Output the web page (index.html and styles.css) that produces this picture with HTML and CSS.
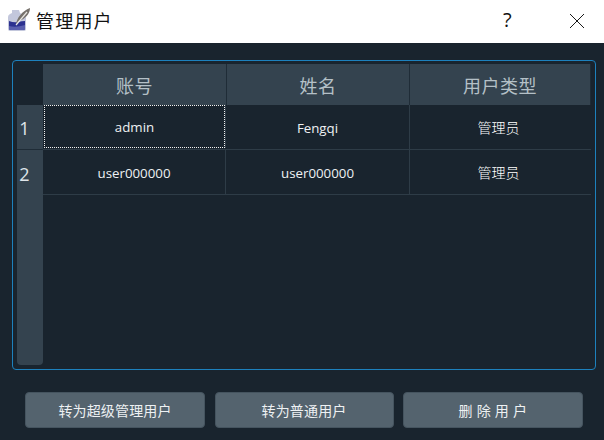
FILE: index.html
```html
<!DOCTYPE html>
<html lang="zh">
<head>
<meta charset="utf-8">
<title>管理用户</title>
<link rel="stylesheet" href="styles.css">
</head>
<body>
<div class="window">
  <header class="titlebar">
    <svg class="app-icon" width="24" height="26" viewBox="0 0 24 26">
      <path d="M5 3h7l1 3 4 2q2 1 2 3v11q0 2-2 2H3q-2 0-2-2V10q0-2 2-3l2-1z" fill="#c3c7dc"/>
      <path d="M2 14q5 2 9 1t7-1v8q0 1-2 1H4q-2 0-2-1z" fill="#2c3190"/>
      <path d="M2 19q7 2 16-1v4q0 1-2 1H4q-2 0-2-1z" fill="#5a5fae"/>
      <path d="M9 17C10 11 15 4 23 1 23 7 18 12 12 14z" fill="#77726c"/>
      <path d="M9 18 20 5" stroke="#e9e7e2" stroke-width="1.2" fill="none"/>
    </svg>
    <span class="title">管理用户</span>
    <span class="help">?</span>
    <svg class="close" width="16" height="16" viewBox="0 0 16 16"><path d="M1 1l14 14M15 1L1 15" stroke="#1a1a1a" stroke-width="1" fill="none"/></svg>
  </header>
  <main class="content">
    <section class="frame">
      <div class="table">
        <div class="corner"></div>
        <div class="col-head">账号</div>
        <div class="col-head">姓名</div>
        <div class="col-head">用户类型</div>
        <div class="row-heads">
          <div class="row-head">1</div>
          <div class="row-head">2</div>
        </div>
        <div class="rows">
          <div class="row">
            <div class="cell current">admin</div>
            <div class="cell">Fengqi</div>
            <div class="cell">管理员</div>
          </div>
          <div class="row">
            <div class="cell">user000000</div>
            <div class="cell">user000000</div>
            <div class="cell">管理员</div>
          </div>
        </div>
      </div>
    </section>
    <footer class="actions">
      <button class="btn">转为超级管理用户</button>
      <button class="btn">转为普通用户</button>
      <button class="btn wide">删 除 用 户</button>
    </footer>
  </main>
</div>
</body>
</html>
```
FILE: styles.css
```css
* { box-sizing: border-box; }
html, body { margin: 0; padding: 0; }
body {
  width: 604px;
  height: 440px;
  overflow: hidden;
  background: #19242e;
  font-family: "Noto Sans CJK SC", "Open Sans", sans-serif;
}
.window { display: flex; flex-direction: column; height: 440px; }
.titlebar {
  height: 43px;
  background: #fff;
  display: flex;
  align-items: center;
  padding: 0 19px 0 7px;
  color: #111;
}
.app-icon { width: 24px; height: 26px; margin-top: -4px; }
.title { margin-left: 5px; margin-top: -4px; font-size: 18px; letter-spacing: 1.2px; line-height: 24px; flex: 1; }
.help { font-family: "Open Sans", sans-serif; font-size: 20px; width: 16px; margin: -5px 50px 0 -9px; }
.close { display: block; margin-top: -1px; }
.content { flex: 1; display: flex; flex-direction: column; padding: 17px 8px 12px 12px; }
.frame {
  height: 310px;
  border: 1px solid #1d81bd;
  border-radius: 4px;
  padding: 3px 4px 4px 4px;
}
.table {
  display: grid;
  grid-template-columns: 26px 184px 183px 181px;
  grid-template-rows: 41px 260px;
  width: 574px;
}
.col-head {
  background: #34434f;
  border-right: 1px solid #1f2c37;
  color: #b4c0c7;
  font-size: 18px;
  display: flex;
  align-items: center;
  justify-content: center;
  letter-spacing: 0.5px;
}
.col-head:last-of-type { border-right: 0; }
.corner { background: #19242e; }
.row-heads {
  background: #34434f;
  border-radius: 0 0 4px 4px;
  color: #dfe6ea;
  font-family: "Open Sans", sans-serif;
  font-size: 18px;
}
.row-head {
  height: 45px;
  display: flex;
  align-items: center;
  justify-content: center;
  padding: 2px 11px 0 0;
  border-bottom: 1px solid #1f2c37;
}
.row-head:last-child { border-bottom: 0; }
.rows { grid-column: 2 / 5; }
.row { display: grid; grid-template-columns: 183px 184px 181px; height: 45px; border-bottom: 1px solid #2e3c47; }
.cell {
  display: flex;
  align-items: center;
  justify-content: center;
  color: #eef1f3;
  font-family: "Open Sans", "Noto Sans CJK SC", sans-serif;
  font-size: 13.3px;
  border-right: 1px solid #2e3c47;
  padding-top: 1px;
}
.cell:last-child { border-right: 0; width: 181px; padding: 0 4px 0 0; color: #fff; font-family: "Noto Sans CJK SC", sans-serif; font-size: 14px; font-weight: 300; }
.current { outline: 1px dotted #f2f2f2; outline-offset: -1px; margin: 0 1px 1px 1px; border-right: 0; box-shadow: 1px 0 0 #2e3c47; }
.actions { display: flex; gap: 9.5px; margin-top: 22px; padding-left: 13px; }
.btn {
  width: 180px;
  height: 36px;
  background: #54636e;
  border: 1px solid #45545f;
  border-radius: 4px;
  color: #eef1f3;
  font-family: "Noto Sans CJK SC", sans-serif;
  font-size: 14px;
  letter-spacing: 0.15px;
  padding: 0;
}
.btn:nth-child(2) { width: 179px; }
.wide { letter-spacing: 0.5px; }
```
